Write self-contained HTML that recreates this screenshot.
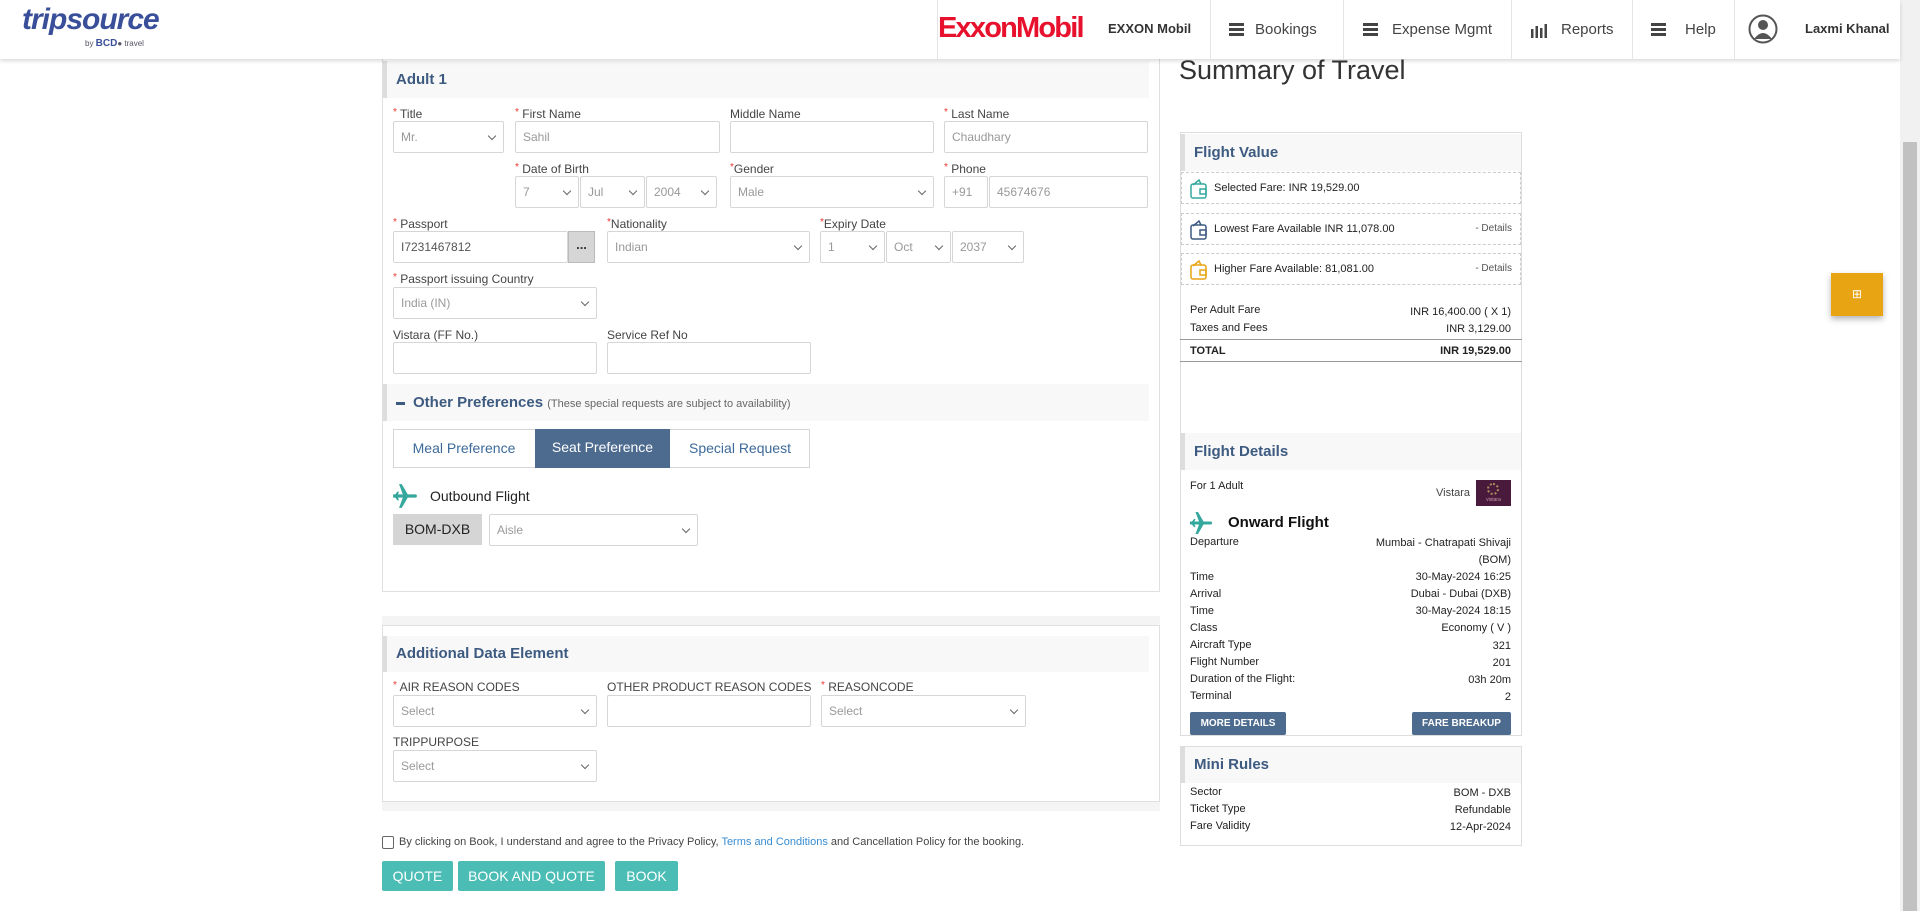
<!DOCTYPE html>
<html><head><meta charset="utf-8"><style>
*{box-sizing:border-box;margin:0;padding:0}
body{width:1920px;height:911px;overflow:hidden;background:#fff;font-family:"Liberation Sans",sans-serif;color:#333;position:relative}
.a{position:absolute}
.hdr{left:0;top:0;width:1900px;height:59px;background:#fff;box-shadow:0 2px 4px rgba(0,0,0,.15);z-index:5}
.sep{top:0;width:1px;height:59px;background:#e5e5e5}
.nav{font-size:15px;color:#444;top:21px}
.ham{width:15px;height:13px;border-top:3px solid #444;border-bottom:3px solid #444;top:23px}
.ham:after{content:"";position:absolute;left:0;top:2px;width:15px;height:3px;background:#444}
.lbl{font-size:12px;color:#444;white-space:nowrap}
.lbl b{color:#e33;font-weight:normal;font-size:10px;vertical-align:top}
.in{height:32px;border:1px solid #d6d6d6;border-radius:2px;background:#fff;font-size:12px;color:#999;padding:0 7px;line-height:30px;white-space:nowrap;overflow:hidden}
.sel:after{content:"";position:absolute;right:8px;top:11px;width:5px;height:5px;border-right:1.5px solid #666;border-bottom:1.5px solid #666;transform:rotate(45deg)}
.sh{background:#f8f8f8;border-left:4px solid #ddd;color:#3d5a80;font-size:15px;font-weight:bold;padding-left:9px}
.row{font-size:11px;color:#222;white-space:nowrap}
.r{text-align:right}
.btn{background:#4bbdb5;color:#fff;font-size:14px;text-align:center;line-height:30px;border-radius:2px}
.bb{background:#4d6b8f;color:#fff;font-size:10px;font-weight:bold;text-align:center;line-height:23px;border-radius:2px}
.fare{left:1181px;width:340px;height:32px;border:1px dashed #ccc;font-size:11px;color:#222;line-height:30px;padding-left:32px}
.fare svg{position:absolute;left:8px;top:6px}
.fare span{position:absolute;right:8px;font-size:10px;color:#555}
</style></head><body>
<div class="a hdr">
 <div class="a" style="left:22px;top:3px;font-size:30px;font-weight:bold;font-style:italic;color:#3a4f9a;letter-spacing:-1px">tripsource</div>
 <div class="a" style="left:85px;top:38px;font-size:8px;color:#556">by <b style="font-size:10px;color:#3a4f9a">BCD</b>● travel</div>
 <div class="a sep" style="left:937px"></div>
 <div class="a" style="left:938px;top:12px;font-size:29px;font-weight:bold;color:#e8112d;letter-spacing:-1.8px">ExxonMobil</div>
 <div class="a" style="left:1108px;top:21px;font-size:13px;font-weight:bold;color:#333">EXXON Mobil</div>
 <div class="a sep" style="left:1210px"></div>
 <div class="a ham" style="left:1229px"></div><div class="a nav" style="left:1255px">Bookings</div>
 <div class="a sep" style="left:1343px"></div>
 <div class="a ham" style="left:1363px"></div><div class="a nav" style="left:1392px">Expense Mgmt</div>
 <div class="a sep" style="left:1511px"></div>
 <svg class="a" style="left:1531px;top:22px" width="16" height="16"><g fill="#444"><rect x="0" y="7" width="2.5" height="9"/><rect x="4.5" y="4" width="2.5" height="12"/><rect x="9" y="6" width="2.5" height="10"/><rect x="13.5" y="2" width="2.5" height="14"/></g></svg>
 <div class="a nav" style="left:1561px">Reports</div>
 <div class="a sep" style="left:1632px"></div>
 <div class="a ham" style="left:1651px"></div><div class="a nav" style="left:1685px">Help</div>
 <div class="a sep" style="left:1734px"></div>
 <svg class="a" style="left:1748px;top:14px" width="30" height="30"><circle cx="15" cy="15" r="13.5" fill="#fff" stroke="#555" stroke-width="2"/><circle cx="15" cy="11" r="5" fill="#555"/><path d="M6 25 Q15 13 24 25 Z" fill="#555"/></svg>
 <div class="a" style="left:1805px;top:21px;font-size:13px;font-weight:bold;color:#333">Laxmi Khanal</div>
</div>
<div class="a" style="left:1900px;top:0;width:20px;height:911px;background:#f1f1f1"></div>
<div class="a" style="left:1903px;top:142px;width:14px;height:769px;background:#c1c1c1"></div>

<div class="a" style="left:382px;top:59px;width:778px;height:533px;border:1px solid #e0e0e0;border-top:none"></div>
<div class="a sh" style="left:383px;top:61px;width:766px;height:37px;line-height:37px">Adult 1</div>

<div class="a lbl" style="left:393px;top:107px"><b>*</b> Title</div>
<div class="a lbl" style="left:515px;top:107px"><b>*</b> First Name</div>
<div class="a lbl" style="left:730px;top:107px">Middle Name</div>
<div class="a lbl" style="left:944px;top:107px"><b>*</b> Last Name</div>
<div class="a in sel" style="left:393px;top:121px;width:111px">Mr.</div>
<div class="a in" style="left:515px;top:121px;width:205px">Sahil</div>
<div class="a in" style="left:730px;top:121px;width:204px"></div>
<div class="a in" style="left:944px;top:121px;width:204px">Chaudhary</div>

<div class="a lbl" style="left:515px;top:162px"><b>*</b> Date of Birth</div>
<div class="a lbl" style="left:730px;top:162px"><b>*</b>Gender</div>
<div class="a lbl" style="left:944px;top:162px"><b>*</b> Phone</div>
<div class="a in sel" style="left:515px;top:176px;width:64px">7</div>
<div class="a in sel" style="left:580px;top:176px;width:65px">Jul</div>
<div class="a in sel" style="left:646px;top:176px;width:71px">2004</div>
<div class="a in sel" style="left:730px;top:176px;width:204px">Male</div>
<div class="a in" style="left:944px;top:176px;width:44px">+91</div>
<div class="a in" style="left:989px;top:176px;width:159px">45674676</div>

<div class="a lbl" style="left:393px;top:217px"><b>*</b> Passport</div>
<div class="a lbl" style="left:607px;top:217px"><b>*</b>Nationality</div>
<div class="a lbl" style="left:820px;top:217px"><b>*</b>Expiry Date</div>
<div class="a in" style="left:393px;top:231px;width:175px;color:#555">I7231467812</div>
<div class="a" style="left:568px;top:231px;width:27px;height:32px;background:#d6d6d6;border:1px solid #bbb;text-align:center;font-weight:bold;font-size:13px;line-height:26px">...</div>
<div class="a in sel" style="left:607px;top:231px;width:203px">Indian</div>
<div class="a in sel" style="left:820px;top:231px;width:65px">1</div>
<div class="a in sel" style="left:886px;top:231px;width:65px">Oct</div>
<div class="a in sel" style="left:952px;top:231px;width:72px">2037</div>

<div class="a lbl" style="left:393px;top:272px"><b>*</b> Passport issuing Country</div>
<div class="a in sel" style="left:393px;top:287px;width:204px">India (IN)</div>

<div class="a lbl" style="left:393px;top:328px">Vistara (FF No.)</div>
<div class="a lbl" style="left:607px;top:328px">Service Ref No</div>
<div class="a in" style="left:393px;top:342px;width:204px"></div>
<div class="a in" style="left:607px;top:342px;width:204px"></div>

<div class="a sh" style="left:383px;top:384px;width:766px;height:37px;line-height:37px;font-size:15px"><span style="display:inline-block;width:9px;height:3px;background:#3d5a80;vertical-align:middle;margin-right:8px"></span>Other Preferences <span style="font-size:11px;color:#666;font-weight:normal">(These special requests are subject to availability)</span></div>
<div class="a" style="left:393px;top:429px;width:417px;height:39px;border:1px solid #d6d6d6"></div>
<div class="a" style="left:393px;top:429px;width:142px;height:39px;line-height:39px;text-align:center;font-size:14px;color:#3d6a9a">Meal Preference</div>
<div class="a" style="left:535px;top:429px;width:135px;height:39px;line-height:37px;text-align:center;font-size:14px;color:#fff;background:#4d6b8f">Seat Preference</div>
<div class="a" style="left:670px;top:429px;width:140px;height:39px;line-height:39px;text-align:center;font-size:14px;color:#3d6a9a">Special Request</div>

<svg class="a" style="left:392px;top:483px" width="26" height="26" viewBox="0 0 24 24"><path d="M1 10.5 L3 10.5 L5 8 L6.5 8 L5.5 10.5 L10 10.5 L6.5 1 L9 1 L14.5 10.5 L21.5 10.5 A1.5 1.5 0 0 1 21.5 13.5 L14.5 13.5 L9 23 L6.5 23 L10 13.5 L5.5 13.5 L6.5 16 L5 16 L3 13.5 L1 13.5 Z" fill="#35a89e"/></svg>
<div class="a" style="left:430px;top:488px;font-size:14px;color:#222">Outbound Flight</div>
<div class="a" style="left:393px;top:514px;width:89px;height:31px;background:#d5d5d5;font-size:14px;color:#222;text-align:center;line-height:31px">BOM-DXB</div>
<div class="a in sel" style="left:489px;top:514px;width:209px">Aisle</div>

<div class="a" style="left:382px;top:616px;width:778px;height:195px;background:#f4f4f4"></div>
<div class="a" style="left:382px;top:625px;width:778px;height:177px;background:#fff;border:1px solid #e0e0e0"></div>
<div class="a sh" style="left:383px;top:636px;width:766px;height:36px;line-height:36px">Additional Data Element</div>
<div class="a lbl" style="left:393px;top:680px"><b>*</b> AIR REASON CODES</div>
<div class="a lbl" style="left:607px;top:680px">OTHER PRODUCT REASON CODES</div>
<div class="a lbl" style="left:821px;top:680px"><b>*</b> REASONCODE</div>
<div class="a in sel" style="left:393px;top:695px;width:204px">Select</div>
<div class="a in" style="left:607px;top:695px;width:204px"></div>
<div class="a in sel" style="left:821px;top:695px;width:205px">Select</div>
<div class="a lbl" style="left:393px;top:735px">TRIPPURPOSE</div>
<div class="a in sel" style="left:393px;top:750px;width:204px">Select</div>

<div class="a" style="left:382px;top:836px;width:12px;height:13px;border:1px solid #666;border-radius:2px"></div>
<div class="a" style="left:399px;top:836px;font-size:11px;color:#444;white-space:nowrap">By clicking on Book, I understand and agree to the Privacy Policy, <span style="color:#3a8dd0">Terms and Conditions</span> and Cancellation Policy for the booking.</div>
<div class="a btn" style="left:382px;top:861px;width:71px">QUOTE</div>
<div class="a btn" style="left:458px;top:861px;width:147px">BOOK AND QUOTE</div>
<div class="a btn" style="left:615px;top:861px;width:63px">BOOK</div>

<div class="a" style="left:1179px;top:55px;font-size:27px;color:#333">Summary of Travel</div>
<div class="a" style="left:1180px;top:132px;width:342px;height:604px;border:1px solid #ddd"></div>
<div class="a sh" style="left:1181px;top:134px;width:340px;height:37px;line-height:37px">Flight Value</div>
<div class="a fare" style="top:172px"><svg width="18" height="20" viewBox="0 0 18 20"><path d="M3 6 L9 1 L11 5" fill="none" stroke="#35a89e" stroke-width="1.5"/><rect x="1" y="5" width="15" height="14" rx="2" fill="none" stroke="#35a89e" stroke-width="1.5"/><rect x="10" y="10" width="6" height="5" fill="none" stroke="#35a89e" stroke-width="1.5"/></svg>Selected Fare: INR 19,529.00</div>
<div class="a fare" style="top:213px"><svg width="18" height="20" viewBox="0 0 18 20"><path d="M3 6 L9 1 L11 5" fill="none" stroke="#3d5a80" stroke-width="1.5"/><rect x="1" y="5" width="15" height="14" rx="2" fill="none" stroke="#3d5a80" stroke-width="1.5"/><rect x="10" y="10" width="6" height="5" fill="none" stroke="#3d5a80" stroke-width="1.5"/></svg>Lowest Fare Available INR 11,078.00<span>- Details</span></div>
<div class="a fare" style="top:253px"><svg width="18" height="20" viewBox="0 0 18 20"><path d="M3 6 L9 1 L11 5" fill="none" stroke="#e8a413" stroke-width="1.5"/><rect x="1" y="5" width="15" height="14" rx="2" fill="none" stroke="#e8a413" stroke-width="1.5"/><rect x="10" y="10" width="6" height="5" fill="none" stroke="#e8a413" stroke-width="1.5"/></svg>Higher Fare Available: 81,081.00<span>- Details</span></div>
<div class="a row" style="left:1190px;top:304px">Per Adult Fare</div><div class="a row r" style="left:1300px;width:211px;top:306px">INR 16,400.00 ( X 1)</div>
<div class="a row" style="left:1190px;top:322px">Taxes and Fees</div><div class="a row r" style="left:1300px;width:211px;top:323px">INR 3,129.00</div>
<div class="a" style="left:1180px;top:339px;width:342px;height:1px;background:#999"></div>
<div class="a row" style="left:1190px;top:345px;font-weight:bold">TOTAL</div><div class="a row r" style="left:1300px;width:211px;top:345px;font-weight:bold">INR 19,529.00</div>
<div class="a" style="left:1180px;top:361px;width:342px;height:1px;background:#999"></div>

<div class="a sh" style="left:1181px;top:433px;width:340px;height:37px;line-height:37px">Flight Details</div>
<div class="a row" style="left:1190px;top:480px">For 1 Adult</div>
<div class="a row" style="left:1436px;top:487px;color:#444">Vistara</div>
<div class="a" style="left:1476px;top:480px;width:35px;height:26px;background:#4a1a3c;color:#c9a;font-size:5px;text-align:center;padding-top:17px">vistara</div>
<div class="a" style="left:1487px;top:483px;width:12px;height:12px;border-radius:50%;border:2px dotted #b08a5a"></div>
<svg class="a" style="left:1189px;top:511px" width="24" height="24" viewBox="0 0 24 24"><path d="M1 10.5 L3 10.5 L5 8 L6.5 8 L5.5 10.5 L10 10.5 L6.5 1 L9 1 L14.5 10.5 L21.5 10.5 A1.5 1.5 0 0 1 21.5 13.5 L14.5 13.5 L9 23 L6.5 23 L10 13.5 L5.5 13.5 L6.5 16 L5 16 L3 13.5 L1 13.5 Z" fill="#35a89e"/></svg>
<div class="a" style="left:1228px;top:514px;font-size:15px;font-weight:bold;color:#111">Onward Flight</div>
<div class="a row" style="left:1190px;top:536px">Departure</div><div class="a row r" style="left:1300px;width:211px;top:537px">Mumbai - Chatrapati Shivaji</div>
<div class="a row r" style="left:1300px;width:211px;top:554px">(BOM)</div>
<div class="a row" style="left:1190px;top:571px">Time</div><div class="a row r" style="left:1300px;width:211px;top:571px">30-May-2024 16:25</div>
<div class="a row" style="left:1190px;top:588px">Arrival</div><div class="a row r" style="left:1300px;width:211px;top:588px">Dubai - Dubai (DXB)</div>
<div class="a row" style="left:1190px;top:605px">Time</div><div class="a row r" style="left:1300px;width:211px;top:605px">30-May-2024 18:15</div>
<div class="a row" style="left:1190px;top:622px">Class</div><div class="a row r" style="left:1300px;width:211px;top:622px">Economy ( V )</div>
<div class="a row" style="left:1190px;top:639px">Aircraft Type</div><div class="a row r" style="left:1300px;width:211px;top:640px">321</div>
<div class="a row" style="left:1190px;top:656px">Flight Number</div><div class="a row r" style="left:1300px;width:211px;top:657px">201</div>
<div class="a row" style="left:1190px;top:673px">Duration of the Flight:</div><div class="a row r" style="left:1300px;width:211px;top:674px">03h 20m</div>
<div class="a row" style="left:1190px;top:690px">Terminal</div><div class="a row r" style="left:1300px;width:211px;top:691px">2</div>
<div class="a bb" style="left:1190px;top:712px;width:96px">MORE DETAILS</div>
<div class="a bb" style="left:1412px;top:712px;width:99px">FARE BREAKUP</div>

<div class="a" style="left:1180px;top:746px;width:342px;height:100px;border:1px solid #ddd"></div>
<div class="a sh" style="left:1181px;top:747px;width:340px;height:36px;line-height:36px">Mini Rules</div>
<div class="a row" style="left:1190px;top:786px">Sector</div><div class="a row r" style="left:1300px;width:211px;top:787px">BOM - DXB</div>
<div class="a row" style="left:1190px;top:803px">Ticket Type</div><div class="a row r" style="left:1300px;width:211px;top:804px">Refundable</div>
<div class="a row" style="left:1190px;top:820px">Fare Validity</div><div class="a row r" style="left:1300px;width:211px;top:821px">12-Apr-2024</div>

<div class="a" style="left:1831px;top:273px;width:52px;height:43px;background:#e8a413;box-shadow:0 3px 6px rgba(0,0,0,.3);color:#fff;text-align:center;line-height:43px;font-size:12px">⊞</div>
</body></html>
